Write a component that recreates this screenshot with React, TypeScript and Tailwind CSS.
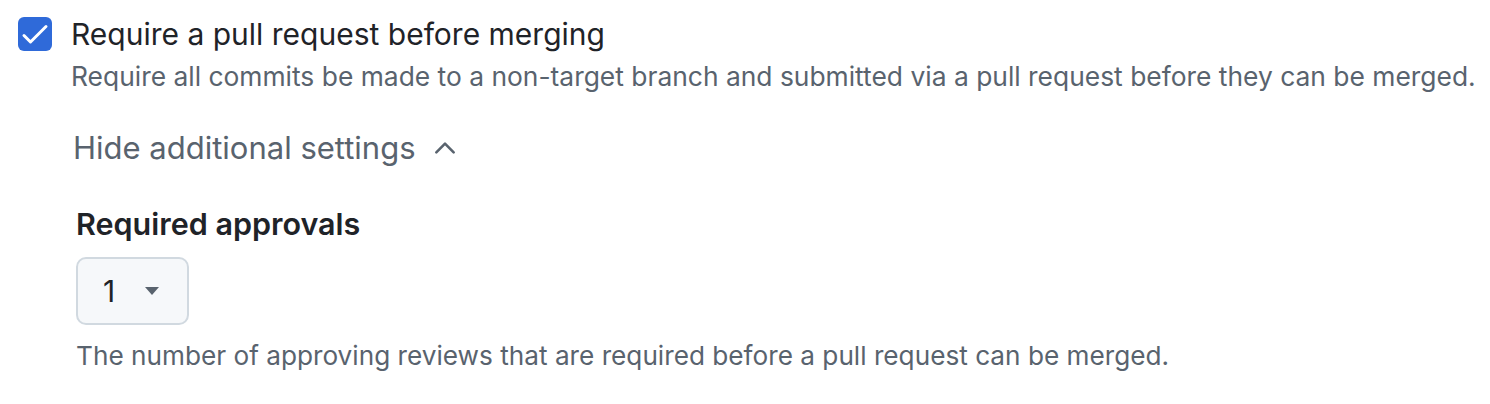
import React from "react";

export default function App() {
  return (
    <div className="w-[1490px] h-[404px] bg-white" style={{ fontFamily: "Inter, 'Noto Sans', sans-serif" }}>
      <div className="flex pl-[18px] pt-[16px]">
        <div className="mt-[1px] w-[34px] h-[34px] rounded-[6px] bg-[#2f6ad9] shrink-0">
          <svg width="34" height="34" viewBox="0 0 34 34" fill="none">
            <path d="M6 18.5l6.5 6.5L28 9.5" stroke="white" strokeWidth="3" strokeLinecap="round" strokeLinejoin="round" />
          </svg>
        </div>
        <div className="ml-[19px] flex flex-col">
          <div className="text-[30px] leading-[36px] text-[#1f2328]">Require a pull request before merging</div>
          <div className="text-[26.4px] leading-[32px] mt-[8px] text-[#59636e]">
            Require all commits be made to a non-target branch and submitted via a pull request before they can be merged.
          </div>
          <div className="mt-[37px] flex items-center text-[31px] leading-[38px] text-[#59636e] ml-[2px]">
            <span>Hide additional settings</span>
            <svg className="ml-[16px]" width="26" height="26" viewBox="0 0 24 24" fill="none">
              <path d="M4 16l8-8 8 8" stroke="#59636e" strokeWidth="2.4" strokeLinecap="round" strokeLinejoin="round" />
            </svg>
          </div>
          <div className="ml-[5px] mt-[39px] text-[30.5px] leading-[36px] font-semibold text-[#1f2328]">Required approvals</div>
          <div className="ml-[5px] mt-[15px] w-[113px] h-[68px] rounded-[10px] border-2 border-[#d1d9e0] bg-[#f6f8fa] flex items-center pl-[25px]">
            <span className="text-[30px] leading-[36px] text-[#1f2328]">1</span>
            <svg className="ml-[29px]" width="16" height="10" viewBox="0 0 16 10">
              <path d="M1 1h14L8 9z" fill="#59636e" />
            </svg>
          </div>
          <div className="ml-[5px] mt-[15px] text-[26.2px] leading-[32px] text-[#59636e]">
            The number of approving reviews that are required before a pull request can be merged.
          </div>
        </div>
      </div>
    </div>
  );
}
